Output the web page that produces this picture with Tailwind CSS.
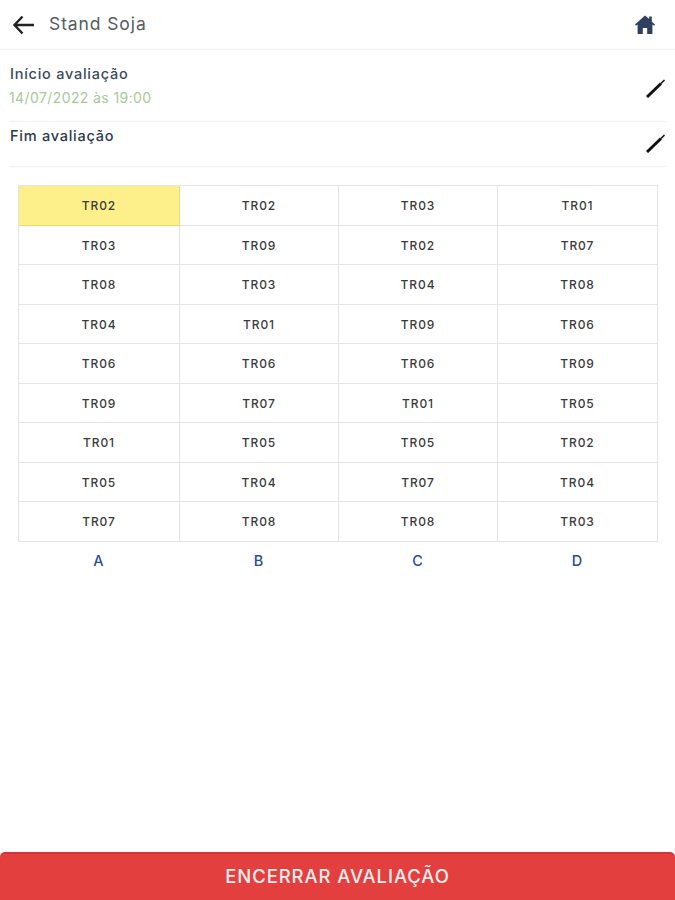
<!DOCTYPE html>
<html lang="en">
<head>
  <meta charset="UTF-8">
  <title>Stand Soja</title>
  <script src="https://cdn.jsdelivr.net/npm/@tailwindcss/browser@4"></script>
</head>
<body class="bg-white font-['Inter',sans-serif]">
  <div class="relative flex h-[900px] w-[675px] flex-col overflow-hidden">
    <!-- header -->
    <header class="flex h-[50px] items-center justify-between border-b border-[#f1f1f1] pl-[12px] pr-[20px]">
      <div class="flex items-center gap-[14px]">
        <svg width="23" height="20" viewBox="0 0 23 20" fill="none" stroke="#222" stroke-width="2.4"><path d="M22 10H2.5M10.5 1.5 2.5 10l8 8.5"/></svg>
        <span class="text-[17.5px] tracking-[0.9px] text-[#555b63]">Stand Soja</span>
      </div>
      <svg width="20" height="19" viewBox="0 0 20 19" fill="#2f3f5f"><path d="M10 .5 0 9.6l1 1.2 1.6-1.4V19h5.2v-6h4.4v6h5.2V9.4l1.6 1.4 1-1.2-3.2-2.9V1.6h-2.6v2.3z"/></svg>
    </header>

    <!-- datas -->
    <section class="mx-[9px]">
      <div class="flex h-[72px] items-start justify-between border-b border-[#f1f1f1] pt-[14px] pl-px">
        <div>
          <p class="text-[14.5px] leading-[20px] font-medium tracking-[0.75px] text-[#3c4a5c]">Início avaliação</p>
          <p class="mt-[4px] -ml-px text-[14px] leading-[20px] tracking-[0.4px] text-[#a9c896]">14/07/2022 às 19:00</p>
        </div>
        <svg class="mt-[15px]" width="20" height="19" viewBox="0 0 20 19" fill="none"><path d="M1 18 15 4.5" stroke="#111" stroke-width="3"/><path d="M15 4.5 18.5 1" stroke="#111" stroke-width="1.6"/></svg>
      </div>
      <div class="flex h-[45px] items-start justify-between border-b border-[#f1f1f1] pt-[4px] pl-px">
        <p class="text-[14.5px] leading-[20px] font-medium tracking-[0.75px] text-[#2c3a4c]">Fim avaliação</p>
        <svg class="mt-[8px]" width="20" height="19" viewBox="0 0 20 19" fill="none"><path d="M1 18 15 4.5" stroke="#111" stroke-width="3"/><path d="M15 4.5 18.5 1" stroke="#111" stroke-width="1.6"/></svg>
      </div>
    </section>

    <!-- croqui -->
    <section class="mx-[18px] mt-[18px] w-[640px]">
      <div class="grid grid-cols-[161px_159px_159px_160px] border-t border-l border-[#e4e4e4] text-center text-[12px] leading-[37.5px] font-medium tracking-[0.9px] text-[#3a3a3a] [&>div]:pt-px">
        <div class="border-r border-b border-[#e8dc70] bg-[#fdf08a]">TR02</div>
        <div class="border-r border-b border-[#e4e4e4]">TR02</div>
        <div class="border-r border-b border-[#e4e4e4]">TR03</div>
        <div class="border-r border-b border-[#e4e4e4]">TR01</div>
        <div class="border-r border-b border-[#e4e4e4]">TR03</div>
        <div class="border-r border-b border-[#e4e4e4]">TR09</div>
        <div class="border-r border-b border-[#e4e4e4]">TR02</div>
        <div class="border-r border-b border-[#e4e4e4]">TR07</div>
        <div class="border-r border-b border-[#e4e4e4]">TR08</div>
        <div class="border-r border-b border-[#e4e4e4]">TR03</div>
        <div class="border-r border-b border-[#e4e4e4]">TR04</div>
        <div class="border-r border-b border-[#e4e4e4]">TR08</div>
        <div class="border-r border-b border-[#e4e4e4]">TR04</div>
        <div class="border-r border-b border-[#e4e4e4]">TR01</div>
        <div class="border-r border-b border-[#e4e4e4]">TR09</div>
        <div class="border-r border-b border-[#e4e4e4]">TR06</div>
        <div class="border-r border-b border-[#e4e4e4]">TR06</div>
        <div class="border-r border-b border-[#e4e4e4]">TR06</div>
        <div class="border-r border-b border-[#e4e4e4]">TR06</div>
        <div class="border-r border-b border-[#e4e4e4]">TR09</div>
        <div class="border-r border-b border-[#e4e4e4]">TR09</div>
        <div class="border-r border-b border-[#e4e4e4]">TR07</div>
        <div class="border-r border-b border-[#e4e4e4]">TR01</div>
        <div class="border-r border-b border-[#e4e4e4]">TR05</div>
        <div class="border-r border-b border-[#e4e4e4]">TR01</div>
        <div class="border-r border-b border-[#e4e4e4]">TR05</div>
        <div class="border-r border-b border-[#e4e4e4]">TR05</div>
        <div class="border-r border-b border-[#e4e4e4]">TR02</div>
        <div class="border-r border-b border-[#e4e4e4]">TR05</div>
        <div class="border-r border-b border-[#e4e4e4]">TR04</div>
        <div class="border-r border-b border-[#e4e4e4]">TR07</div>
        <div class="border-r border-b border-[#e4e4e4]">TR04</div>
        <div class="border-r border-b border-[#e4e4e4]">TR07</div>
        <div class="border-r border-b border-[#e4e4e4]">TR08</div>
        <div class="border-r border-b border-[#e4e4e4]">TR08</div>
        <div class="border-r border-b border-[#e4e4e4]">TR03</div>
      </div>
      <div class="grid grid-cols-[161px_159px_159px_160px] pt-[9px] text-center text-[14.5px] leading-[20px] font-medium text-[#2a4a9c]">
        <div>A</div>
        <div>B</div>
        <div>C</div>
        <div>D</div>
      </div>
    </section>

    <button class="mt-auto h-[48px] w-full rounded-t-[5px] border-t-2 border-[#d43434] bg-[#e33f3f] text-[18.5px] font-medium tracking-[0.9px] text-[#fdeeee]">ENCERRAR AVALIAÇÃO</button>
  </div>
</body>
</html>
